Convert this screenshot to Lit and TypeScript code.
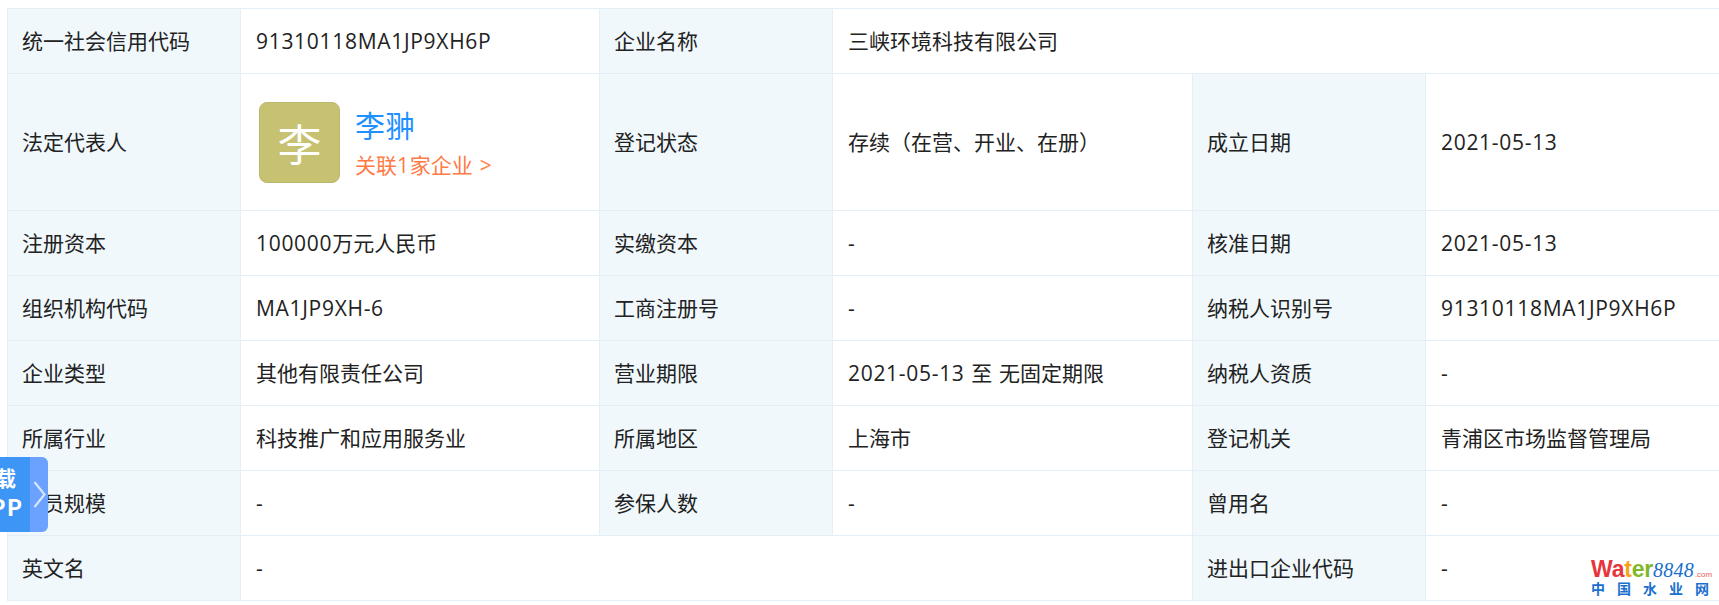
import { LitElement, html, css } from "lit";
import { customElement } from "lit/decorators.js";

const rows: { h: number; cells: (string | { v: string; span: number })[] }[] = [
  { h: 65, cells: ["统一社会信用代码", "91310118MA1JP9XH6P", "企业名称", { v: "三峡环境科技有限公司", span: 3 }] },
  { h: 137, cells: ["法定代表人", "@person", "登记状态", "存续（在营、开业、在册）", "成立日期", "2021-05-13"] },
  { h: 65, cells: ["注册资本", "100000万元人民币", "实缴资本", "-", "核准日期", "2021-05-13"] },
  { h: 65, cells: ["组织机构代码", "MA1JP9XH-6", "工商注册号", "-", "纳税人识别号", "91310118MA1JP9XH6P"] },
  { h: 65, cells: ["企业类型", "其他有限责任公司", "营业期限", "2021-05-13 至 无固定期限", "纳税人资质", "-"] },
  { h: 65, cells: ["所属行业", "科技推广和应用服务业", "所属地区", "上海市", "登记机关", "青浦区市场监督管理局"] },
  { h: 65, cells: ["人员规模", "-", "参保人数", "-", "曾用名", "-"] },
  { h: 65, cells: ["英文名", { v: "-", span: 3 }, "进出口企业代码", "-"] },
];

// Latin runs get their own class: the reference's Latin is wider than its CJK font's.
function runs(text: string) {
  return text.split(/([\x21-\x7e]+)/).map((part, i) => (i % 2 ? html`<span class="lat">${part}</span>` : part));
}

@customElement("app-root")
export class AppRoot extends LitElement {
  static styles = css`
    :host {
      display: block;
      position: relative;
      width: 1719px;
      height: 605px;
      overflow: hidden;
      background: #fff;
      font-family: "Noto Sans CJK SC", sans-serif;
      font-size: 21px;
      color: #222;
    }
    .lat {
      font-family: "Open Sans", "Noto Sans CJK SC", sans-serif;
      letter-spacing: 0.7px;
    }
    .tbl {
      display: grid;
      grid-template-columns: 233px 359px 233px 360px 233px 300px;
      margin: 8px 0 0 7px;
      border-top: 1px solid #e4eef6;
      border-left: 1px solid #e4eef6;
      width: 1712px;
    }
    .c {
      display: flex;
      align-items: center;
      padding: 0 15px 2px;
      border-right: 1px solid #e4eef6;
      border-bottom: 1px solid #e4eef6;
      box-sizing: border-box;
      white-space: pre;
      word-spacing: 2px;
    }
    .l { background: #f0f8fc; padding-left: 14px; }
    .s3 { grid-column: span 3; }
    .person { display: flex; align-items: center; gap: 15px; margin: 2px 0 0 3px; }
    .avatar {
      width: 81px;
      height: 81px;
      box-sizing: border-box;
      border: 1px solid #bdb96c;
      border-radius: 8px;
      padding-top: 2px;
      background: #c6c272;
      color: #fff;
      font-size: 44px;
      display: flex;
      align-items: center;
      justify-content: center;
    }
    .pinfo { display: flex; flex-direction: column; gap: 6px; padding-top: 1px; }
    .name { font-size: 30px; line-height: 38px; color: #1e90ff; }
    .rel { color: #ff7a45; line-height: 30px; }
    .gt { margin-left: 7px; }
    .tab {
      position: absolute;
      left: 0;
      top: 457px;
      width: 48px;
      height: 75px;
      display: flex;
      border-radius: 0 6px 6px 0;
      overflow: hidden;
      color: #fff;
      font-weight: 700;
      font-size: 21px;
    }
    .tabmain {
      width: 30px;
      background: #3d96f6;
      position: relative;
      overflow: hidden;
    }
    .tabtxt {
      position: absolute;
      right: 14px;
      top: 6px;
      line-height: 29px;
      text-align: right;
      white-space: nowrap;
    }
    .app { display: block; margin-right: -7px; letter-spacing: 1px; font-size: 23px; }
    .tabside {
      flex: 1;
      background: #6ba2ff;
      display: flex;
      align-items: center;
      justify-content: center;
    }
    .logo {
      position: absolute;
      left: 1591px;
      top: 558px;
      width: 120px;
      font-family: "Liberation Sans", sans-serif;
    }
    .wm { display: flex; align-items: baseline; height: 22px; line-height: 22px; white-space: nowrap; }
    .w { font-size: 23px; font-weight: 700; letter-spacing: -0.2px; }
    .r { color: #e8343c; } .o { color: #f5a31c; } .g { color: #7fb82a; }
    .n { font-family: "Liberation Serif", serif; font-style: italic; font-size: 20px; color: #1a6fd0; letter-spacing: 0.2px; }
    .com { font-size: 8px; color: #e8605a; margin-left: 1px; }
    .cn {
      display: flex;
      justify-content: space-between;
      width: 118px;
      font-family: "Noto Sans CJK SC", sans-serif;
      font-size: 14px;
      font-weight: 700;
      line-height: 17px;
      color: #1a6fd0;
    }
  `;

  private person() {
    return html`<div class="person">
      <div class="avatar">李</div>
      <div class="pinfo">
        <div class="name">李翀</div>
        <div class="rel">关联<span class="lat">1</span>家企业<span class="lat gt">&gt;</span></div>
      </div>
    </div>`;
  }

  render() {
    return html`
      <div class="tbl">
        ${rows.flatMap((r) =>
          r.cells.map((c, i) => {
            const v = typeof c === "string" ? c : c.v;
            const span = typeof c === "string" ? 1 : c.span;
            const label = i % 2 === 0 && !(r.cells.length === 4 && i === 3);
            return html`<div class="c ${label ? "l" : ""} ${span === 3 ? "s3" : ""}" style=${`height:${r.h}px`}>${v === "@person" ? this.person() : html`<span>${runs(v)}</span>`}</div>`;
          })
        )}
      </div>
      <div class="tab">
        <div class="tabmain"><div class="tabtxt">下载<span class="app">APP</span></div></div>
        <div class="tabside">
          <svg width="13" height="27" viewBox="0 0 13 27" fill="none" stroke="#d6e4ff" stroke-width="2.2"><path d="M1.5 1 L11.5 13.5 L1.5 26" /></svg>
        </div>
      </div>
      <div class="logo">
        <div class="wm"><span class="w"><span class="r">Wa</span><span class="o">t</span><span class="g">er</span></span><span class="n">8848</span><span class="com r">.com</span></div>
        <div class="cn"><span>中</span><span>国</span><span>水</span><span>业</span><span>网</span></div>
      </div>
    `;
  }
}
